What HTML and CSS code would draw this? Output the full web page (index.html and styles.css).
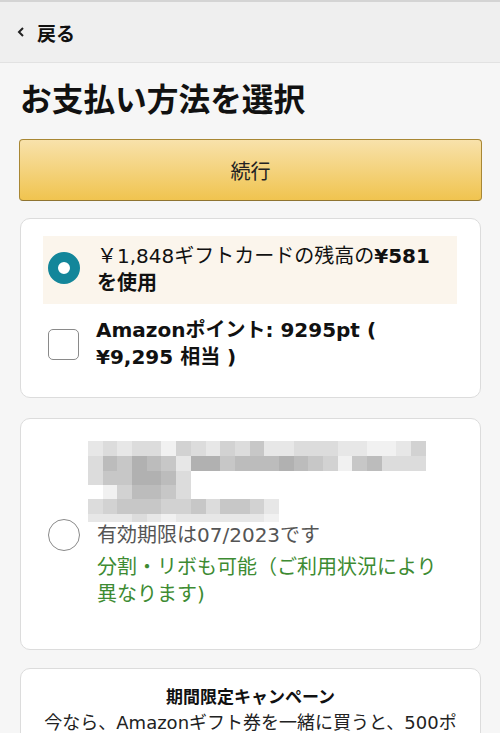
FILE: index.html
```html
<!DOCTYPE html>
<html lang="ja">
<head>
<meta charset="utf-8">
<title>お支払い方法を選択</title>
<link rel="stylesheet" href="styles.css">
</head>
<body>
<header class="topbar">
  <a class="back">
    <svg class="chev" width="8" height="10" viewBox="0 0 8 10"><path d="M6 1 L2 5 L6 9" fill="none" stroke="#222" stroke-width="2"/></svg>
    <span>戻る</span>
  </a>
</header>
<main class="page">
  <h1 class="title">お支払い方法を選択</h1>
  <button class="continue">続行</button>

  <section class="card card-gift">
    <div class="opt opt-selected">
      <span class="radio radio-on"></span>
      <div class="opt-text">￥1,848ギフトカードの残高の<b>¥581 を使用</b></div>
    </div>
    <div class="opt">
      <span class="checkbox"></span>
      <div class="opt-text strong">Amazonポイント: 9295pt ( ¥9,295 相当 )</div>
    </div>
  </section>

  <section class="card card-cc">
    <div class="mosaic">
      <div class="mrow r15"><i class="b"></i><i class="c"></i><i class="b"></i><i class="c"></i><i class="c"></i><i class="a"></i><i class="d"></i><i class="c"></i><i class="b"></i><i class="d"></i><i class="c"></i><i class="e"></i><i class="b"></i><i class="b"></i><i class="c"></i><i class="c"></i><i class="c"></i><i class="b"></i><i class="b"></i><i class="a"></i><i class="a"></i><i class="b"></i><i class="d"></i></div>
      <div class="mrow r15"><i class="c"></i><i class="f"></i><i class="e"></i><i class="g"></i><i class="f"></i><i class="e"></i><i class="b"></i><i class="g"></i><i class="g"></i><i class="e"></i><i class="f"></i><i class="f"></i><i class="f"></i><i class="g"></i><i class="f"></i><i class="e"></i><i class="d"></i><i class="a"></i><i class="e"></i><i class="f"></i><i class="c"></i><i class="c"></i><i class="c"></i></div>
      <div class="mrow r14"><i class="c"></i><i class="e"></i><i class="e"></i><i class="g"></i><i class="g"></i><i class="f"></i><i class="c"></i></div>
      <div class="mrow r14"><i class="w"></i><i class="a"></i><i class="d"></i><i class="f"></i><i class="f"></i><i class="e"></i><i class="c"></i></div>
      <div class="mrow r15"><i class="c"></i><i class="d"></i><i class="e"></i><i class="e"></i><i class="e"></i><i class="d"></i><i class="d"></i><i class="e"></i><i class="c"></i><i class="e"></i><i class="e"></i><i class="d"></i><i class="b"></i></div>
      <div class="mrow r8"><i class="b"></i><i class="b"></i><i class="b"></i><i class="c"></i><i class="b"></i><i class="a"></i><i class="b"></i><i class="b"></i><i class="b"></i><i class="b"></i><i class="b"></i><i class="b"></i><i class="a"></i></div>
    </div>
    <div class="opt opt-cc">
      <span class="radio"></span>
      <div class="opt-text">
        <div class="expiry">有効期限は07/2023です</div>
        <div class="installment">分割・リボも可能（ご利用状況により異なります)</div>
      </div>
    </div>
  </section>

  <section class="card card-promo">
    <h2 class="promo-title">期間限定キャンペーン</h2>
    <p class="promo-text">今なら、Amazonギフト券を一緒に買うと、500ポイントプレゼント</p>
  </section>
</main>
</body>
</html>
```
FILE: styles.css
```css
* { box-sizing: border-box; }
html, body { margin: 0; padding: 0; }
body {
  width: 500px;
  height: 733px;
  overflow: hidden;
  background: #f6f6f6;
  font-family: "DejaVu Sans", "Noto Sans CJK JP", sans-serif;
  color: #111;
}
.topbar {
  height: 63px;
  background: #efefef;
  border-top: 2px solid #d4d4d4;
  border-bottom: 1px solid #e2e2e2;
  display: flex;
  align-items: center;
  padding-left: 17px;
}
.back {
  display: flex;
  align-items: center;
  gap: 12px;
  font-size: 19px;
  font-weight: 700;
  color: #111;
}
.chev { display: block; }
.page {
  padding: 0 19px 0 20px;
  display: flex;
  flex-direction: column;
}
.title {
  margin: 17px 0 0;
  font-size: 31.7px;
  line-height: 40px;
  font-weight: 700;
}
.continue {
  margin: 19px 0 0 -1px;
  height: 62px;
  width: 463px;
  border: 1px solid #a88734;
  border-bottom-color: #8f7431;
  border-radius: 4px;
  background: linear-gradient(#f8e2ab, #f0c44f);
  font-family: inherit;
  font-size: 20px;
  color: #222;
}
.card {
  background: #fff;
  border: 1px solid #dcdcdc;
  border-radius: 10px;
}
.card-gift {
  margin-top: 17px;
  padding: 17px 23px 19px 22px;
  display: flex;
  flex-direction: column;
  gap: 6px;
}
.opt {
  display: flex;
  align-items: center;
  padding: 7px 10px 7px 5px;
}
.opt-selected { background: #fbf5ec; }
.opt-text {
  margin-left: 17px;
  font-size: 20px;
  line-height: 27px;
  flex: 1;
}
.opt-text b { font-weight: 700; }
.strong { font-weight: 600; }
.radio {
  flex: none;
  width: 32px;
  height: 32px;
  border-radius: 50%;
  border: 1.5px solid #8a8a8a;
  background: #fff;
}
.radio-on {
  border: 10px solid #13869a;
  margin-top: -5px;
}
.checkbox {
  flex: none;
  width: 31px;
  height: 31px;
  border: 1.5px solid #8a8a8a;
  border-radius: 5px;
  background: #fff;
}
.card-cc {
  margin-top: 20px;
  padding: 22px 23px 41px 22px;
}
.mosaic {
  margin-left: 45px;
  display: flex;
  flex-direction: column;
}
.mrow { display: flex; }
.mrow i { display: block; width: 14.7px; }
.r15 { height: 15px; }
.r14 { height: 14px; }
.r8 { height: 8px; }
.mrow .a { background: #f1f1f1; }
.mrow .b { background: #e7e7e7; }
.mrow .c { background: #dcdcdc; }
.mrow .d { background: #d2d2d2; }
.mrow .e { background: #c7c7c7; }
.mrow .f { background: #bcbcbc; }
.mrow .g { background: #b1b1b1; }
.mrow .w { background: transparent; }
.opt-cc {
  align-items: flex-start;
  padding: 0 10px 0 5px;
}
.opt-cc .radio { margin-top: -3px; }
.expiry { color: #555; }
.installment { color: #3d8b32; margin-top: 5px; }
.card-promo {
  margin-top: 18px;
  padding: 16px 22px 20px 22px;
  text-align: center;
  height: 120px;
}
.promo-title {
  margin: 0;
  font-size: 17px;
  line-height: 24px;
  font-weight: 700;
}
.promo-text {
  margin: 1px 0 0;
  font-size: 18px;
  line-height: 25px;
  color: #222;
}
```
